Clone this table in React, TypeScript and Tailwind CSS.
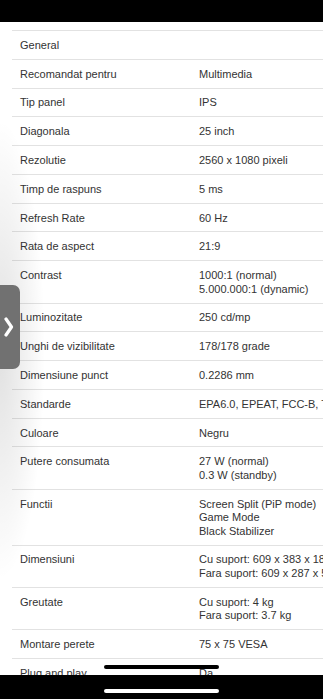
import React from "react";

const rows: [string, string[]][] = [
  ["General", [""]],
  ["Recomandat pentru", ["Multimedia"]],
  ["Tip panel", ["IPS"]],
  ["Diagonala", ["25 inch"]],
  ["Rezolutie", ["2560 x 1080 pixeli"]],
  ["Timp de raspuns", ["5 ms"]],
  ["Refresh Rate", ["60 Hz"]],
  ["Rata de aspect", ["21:9"]],
  ["Contrast", ["1000:1 (normal)", "5.000.000:1 (dynamic)"]],
  ["Luminozitate", ["250 cd/mp"]],
  ["Unghi de vizibilitate", ["178/178 grade"]],
  ["Dimensiune punct", ["0.2286 mm"]],
  ["Standarde", ["EPA6.0, EPEAT, FCC-B, TUV"]],
  ["Culoare", ["Negru"]],
  ["Putere consumata", ["27 W (normal)", "0.3 W (standby)"]],
  ["Functii", ["Screen Split (PiP mode)", "Game Mode", "Black Stabilizer"]],
  ["Dimensiuni", ["Cu suport: 609 x 383 x 185 mm", "Fara suport: 609 x 287 x 55 mm"]],
  ["Greutate", ["Cu suport: 4 kg", "Fara suport: 3.7 kg"]],
  ["Montare perete", ["75 x 75 VESA"]],
  ["Plug and play", ["Da"]],
  ["Garantie", ["24 luni"]],
];

export default function App() {
  return (
    <div
      className="relative w-[323px] h-[699px] overflow-hidden bg-white text-[#333333]"
      style={{ fontFamily: '"Liberation Sans", Arial, sans-serif' }}
    >
      <div className="h-[22px] bg-black" />
      <div className="h-[9px] ml-[12px] border-b border-[#e2e2e2]" />
      <div className="ml-[12px] flex flex-col">
        {rows.map(([label, vals]) => (
          <div
            key={label}
            className="flex border-b border-[#e2e2e2] pt-[7.9px] pb-[6.4px] text-[11px] leading-[13.5px] whitespace-nowrap"
          >
            <div className="w-[187px] shrink-0 pl-[8px]">{label}</div>
            <div className="flex flex-col">
              {vals.map((v, i) => (
                <div key={i}>{v || "\u00a0"}</div>
              ))}
            </div>
          </div>
        ))}
      </div>

      {/* left shadow */}
      <div
        className="pointer-events-none absolute left-0 top-[120px] h-[460px] w-[60px]"
        style={{
          background:
            "radial-gradient(ellipse 45px 230px at 0% 50%, rgba(0,0,0,0.12), rgba(0,0,0,0) 100%)",
        }}
      />

      {/* side tab */}
      <div className="absolute left-0 top-[285px] flex h-[84px] w-[20px] items-center justify-center rounded-r-[7px] bg-[#717171]">
        <svg width="10" height="22" viewBox="0 0 10 22" className="ml-[-2px]">
          <path d="M2 3 L7.5 11 L2 19" fill="none" stroke="white" strokeWidth="3.2" strokeLinecap="round" strokeLinejoin="round" />
        </svg>
      </div>

      {/* black pill overlay */}
      <div className="absolute left-[104px] top-[665px] h-[4px] w-[115px] rounded-full bg-black" />

      {/* bottom bar */}
      <div className="absolute bottom-0 left-0 h-[24px] w-full bg-black">
        <div className="absolute left-[104px] top-[14px] h-[4px] w-[115px] rounded-full bg-white" />
      </div>
    </div>
  );
}
